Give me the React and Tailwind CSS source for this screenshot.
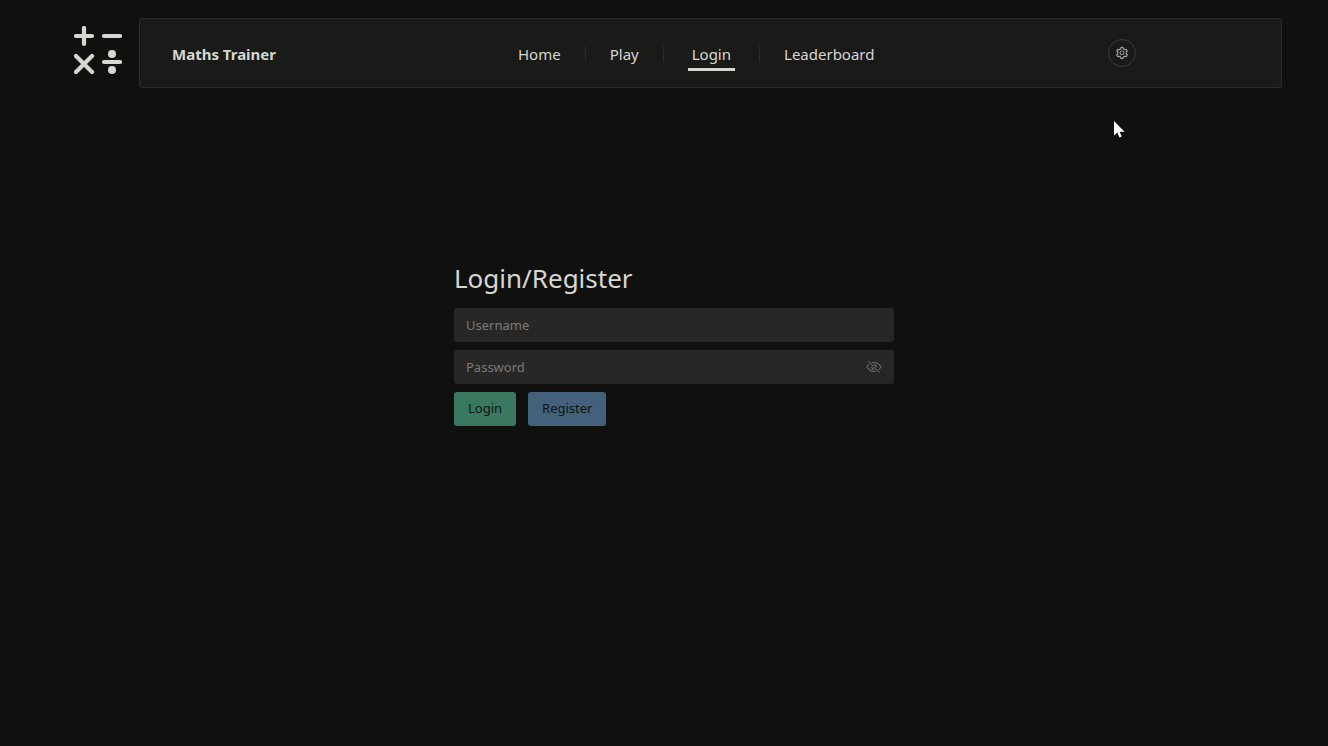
import { useState } from "react";
import { AiOutlineSetting } from "react-icons/ai";
import { IoEyeOffOutline } from "react-icons/io5";

const links = ["Home", "Play", "Login", "Leaderboard"];

function Logo() {
  return (
    <svg viewBox="0 0 48 48" className="h-12 w-12 shrink-0" fill="none" stroke="#d7d7d2" strokeWidth="4.2" strokeLinecap="round" aria-hidden="true">
      <path d="M10 2V18M2 10H18M30 10H46M2 30L18 46M18 30L2 46M30 36H46" />
      <circle cx="38" cy="28" r="4" fill="#d7d7d2" stroke="none" />
      <circle cx="38" cy="44" r="4" fill="#d7d7d2" stroke="none" />
    </svg>
  );
}

function Header() {
  return (
    <header className="flex items-start gap-[17px] pt-[18px] pr-[46px] pl-[74px]">
      <div className="pt-2">
        <Logo />
      </div>
      <div className="grid h-[70px] flex-1 grid-cols-[346fr_590fr_141fr] items-center rounded-[3px] border border-[#2b2b2a] bg-[#1a1a19] px-8">
        <div className="pt-0.5 text-[15px] font-bold">Maths Trainer</div>
        <nav className="flex items-center pt-0.5">
          {links.map((name, i) => (
            <div key={name} className="flex items-center">
              {i > 0 && <span className="mx-6 h-4 w-px bg-[#2b2b2a]" />}
              <a
                href="#"
                className={
                  name === "Login"
                    ? "border-b-[3px] border-[#d7d7d2] px-1 pt-1 pb-0.5 text-[15px] leading-6"
                    : "border-b-[3px] border-transparent pt-1 pb-0.5 text-[15px] leading-6"
                }
              >
                {name}
              </a>
            </div>
          ))}
        </nav>
        <button type="button" aria-label="Settings" className="flex h-7 w-7 items-center justify-center rounded-full border border-[#3b3b39] text-[#b4b4b0]">
          <AiOutlineSetting size={14} />
        </button>
      </div>
    </header>
  );
}

function LoginForm() {
  const [visible, setVisible] = useState(false);
  const box = "h-[34px] w-full rounded-[3px] bg-[#272726] px-3 text-[13px] placeholder:text-[#7b7b78] outline-none";
  return (
    <form className="flex w-full max-w-[440px] flex-col gap-2" onSubmit={(e) => e.preventDefault()}>
      <h1 className="mb-1 text-[26px] leading-9">Login/Register</h1>
      <input className={box} aria-label="Username" placeholder="Username" />
      <div className="relative">
        <input className={box} type={visible ? "text" : "password"} aria-label="Password" placeholder="Password" />
        <button
          type="button"
          aria-label="Toggle password visibility"
          onClick={() => setVisible(!visible)}
          className="absolute inset-y-0 right-3 flex items-center text-[#6b6b68]"
        >
          <IoEyeOffOutline size={16} />
        </button>
      </div>
      <div className="flex gap-3 text-[13px] text-[#0c1512]">
        <button type="submit" className="h-[34px] rounded-[3px] bg-[#3a7860] px-3.5">Login</button>
        <button type="button" className="h-[34px] rounded-[3px] bg-[#43617b] px-3.5">Register</button>
      </div>
    </form>
  );
}

export default function App() {
  return (
    <div className="relative min-h-screen bg-[#10100f] font-['Noto_Sans',sans-serif] text-[#d7d7d2]">
      <Header />
      <main className="flex justify-center pt-[172px] pl-5">
        <LoginForm />
      </main>
      <svg className="pointer-events-none absolute top-[121px] left-[1113px] h-[17px] w-3" viewBox="0 0 12 17" fill="#fff" aria-hidden="true">
        <path d="M1 0V14.5L4.3 11.5L6.5 16.5L8.7 15.5L6.6 10.7H11.5Z" />
      </svg>
    </div>
  );
}
